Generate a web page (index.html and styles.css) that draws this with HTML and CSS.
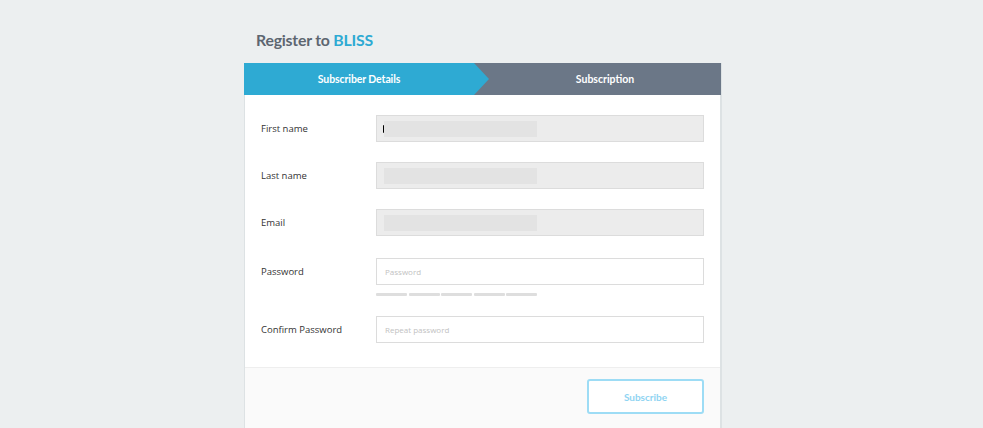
FILE: index.html
```html
<!DOCTYPE html>
<html>
<head>
<meta charset="utf-8">
<link rel="stylesheet" href="styles.css">
</head>
<body>
<div class="wrap">
  <h1 class="title">Register to <span class="brand">BLISS</span></h1>
  <div class="card">
    <div class="steps">
      <div class="step active">Subscriber Details</div>
      <div class="step next">Subscription</div>
    </div>
    <div class="form">
      <div class="row">
        <label class="label">First name</label>
        <div class="input filled"><span class="caret"></span><span class="redact"></span></div>
      </div>
      <div class="row">
        <label class="label">Last name</label>
        <div class="input filled"><span class="redact"></span></div>
      </div>
      <div class="row">
        <label class="label">Email</label>
        <div class="input filled"><span class="redact"></span></div>
      </div>
      <div class="row pw">
        <label class="label">Password</label>
        <div class="field">
          <div class="input empty">Password</div>
          <div class="strength"><i></i><i></i><i></i><i></i><i></i></div>
        </div>
      </div>
      <div class="row">
        <label class="label">Confirm Password</label>
        <div class="input empty">Repeat password</div>
      </div>
    </div>
    <div class="footer">
      <button class="btn">Subscribe</button>
    </div>
  </div>
</div>
</body>
</html>
```
FILE: styles.css
```css
html, body {
  margin: 0;
  padding: 0;
  background: #eceff0;
  height: 100%;
}
body {
  font-family: "Open Sans", "Noto Sans", sans-serif;
}
.wrap {
  width: 478px;
  margin-left: 244px;
  padding-top: 30px;
}
.title {
  margin: 0 0 13px 12px;
  font-family: Lato, sans-serif;
  font-weight: 700;
  font-size: 15.8px;
  line-height: 20px;
  color: #5d6670;
  letter-spacing: -0.2px;
}
.brand {
  color: #2eaad3;
}
.card {
  border: 1px solid #dde2e4;
  border-right-width: 2px;
  border-top: none;
  background: #fff;
}
.steps {
  display: flex;
  height: 32px;
  background: #6b7787;
  margin: 0 -1px 0 -1px;
}
.step {
  font-family: Lato, sans-serif;
  font-weight: 700;
  font-size: 10.5px;
  color: #fff;
  display: flex;
  align-items: center;
  justify-content: center;
}
.step.active {
  width: 245px;
  background: #2eaad3;
  clip-path: polygon(0 0, 230px 0, 245px 50%, 230px 100%, 0 100%);
  padding-right: 15px;
  box-sizing: border-box;
  letter-spacing: -0.1px;
}
.step.next {
  flex: 1;
}
.form {
  padding: 20px 16px 24px 16px;
  display: flex;
  flex-direction: column;
  gap: 20px;
}
.row {
  display: flex;
  align-items: center;
}
.row.pw {
  align-items: flex-start;
  margin-top: 2px;
}
.row.pw .label {
  height: 27px;
  display: flex;
  align-items: center;
}
.label {
  width: 115px;
  font-size: 9.5px;
  color: #333;
}
.field {
  flex: 1;
}
.input {
  flex: 1;
  height: 27px;
  box-sizing: border-box;
  border: 1px solid #dcdcdc;
  display: flex;
  align-items: center;
  padding-left: 8px;
}
.input.filled {
  background: #ececec;
  padding-left: 6px;
}
.input.empty {
  background: #fff;
  font-size: 8px;
  color: #c2c2c2;
}
.caret {
  width: 2px;
  height: 8px;
  background: #000;
  border-radius: 1px;
  margin-right: -2px;
}
.redact {
  width: 153px;
  height: 16px;
  background: #e3e3e3;
  margin-left: 1px;
}
.strength {
  display: flex;
  gap: 1.5px;
  margin-top: 8px;
  height: 3px;
}
.strength i {
  width: 31px;
  height: 3px;
  background: #dedede;
  border-radius: 1px;
}
.footer {
  border-top: 1px solid #eeeeee;
  background: #fafafa;
  padding: 11px 16px 40px;
  display: flex;
  justify-content: flex-end;
}
.btn {
  width: 117px;
  height: 35px;
  background: #fff;
  border: 2px solid #9ddcf5;
  border-radius: 3px;
  color: #8fd4f2;
  font-family: Lato, sans-serif;
  font-weight: 700;
  font-size: 10px;
}
```
